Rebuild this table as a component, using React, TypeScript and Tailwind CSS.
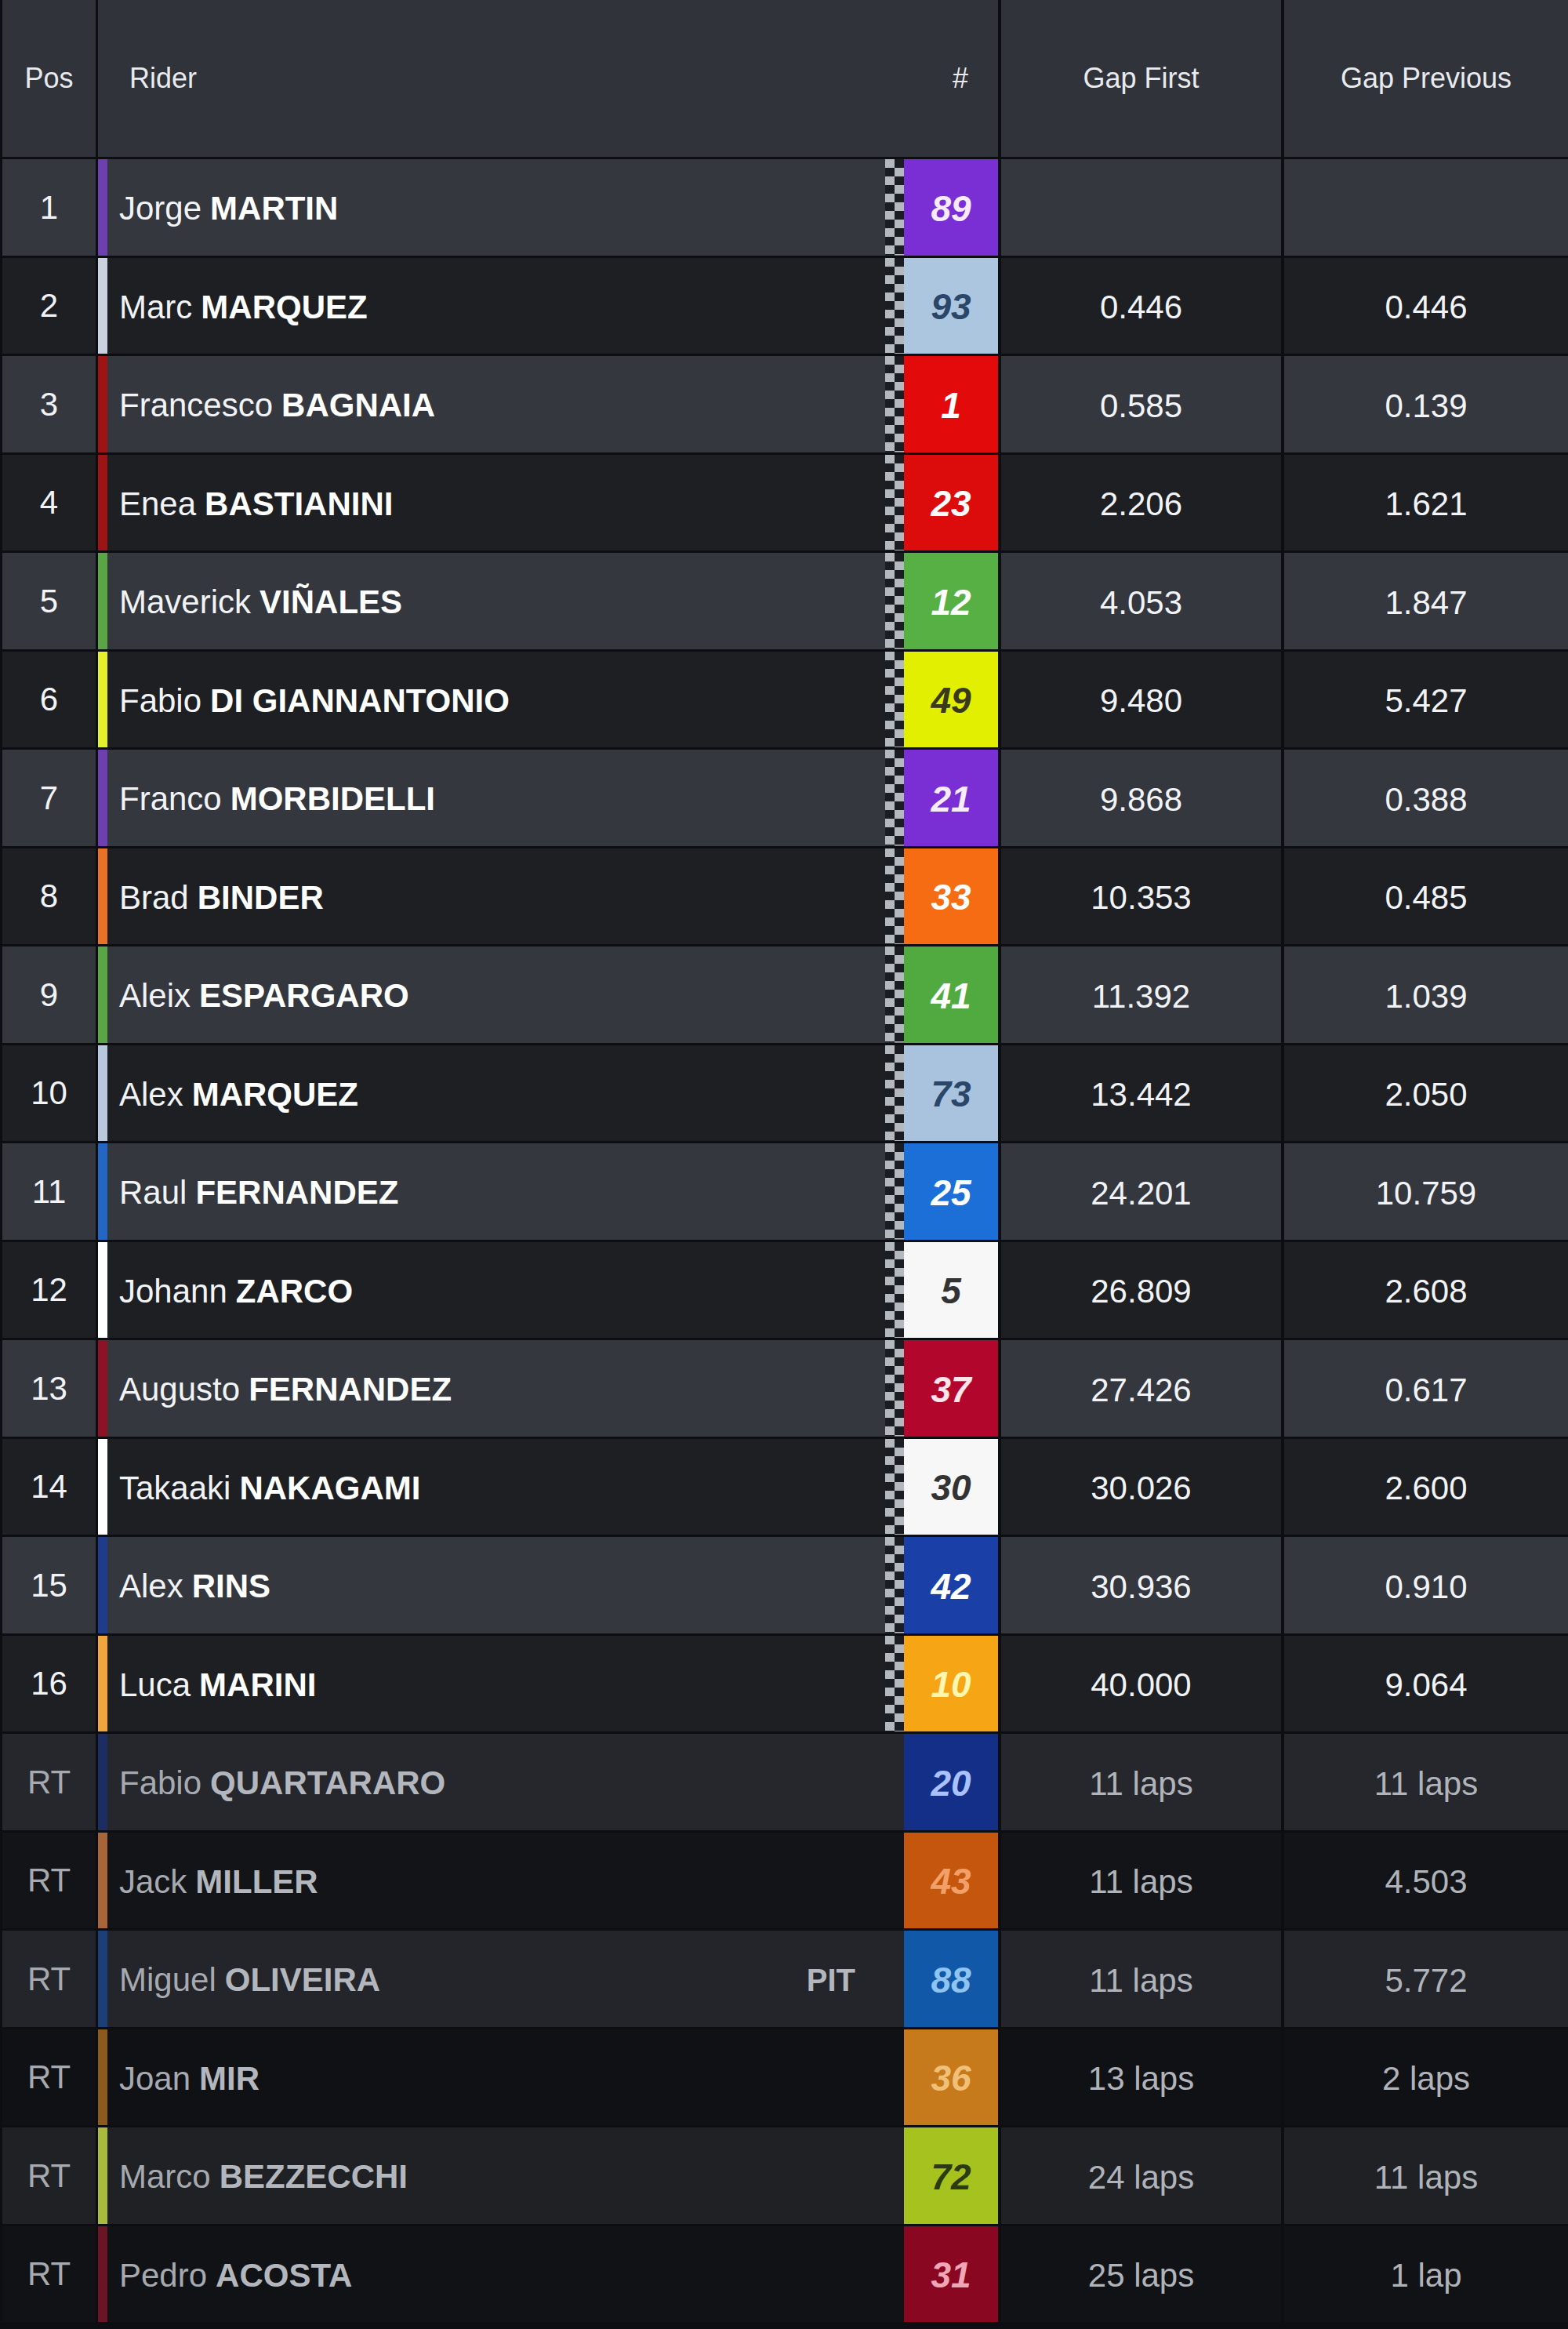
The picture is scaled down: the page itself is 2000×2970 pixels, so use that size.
import React from "react";

type Rider = {
  pos: string;
  first: string;
  last: string;
  num: string;
  bar: string;
  box: string;
  numColor: string;
  gf: string;
  gp: string;
  rt?: boolean;
  pit?: boolean;
};

const riders: Rider[] = [
  { pos: "1", first: "Jorge", last: "MARTIN", num: "89", bar: "#6d3fb0", box: "#7a2fd4", numColor: "#f7ecff", gf: "", gp: "" },
  { pos: "2", first: "Marc", last: "MARQUEZ", num: "93", bar: "#c9d2de", box: "#adc6e0", numColor: "#2a4668", gf: "0.446", gp: "0.446" },
  { pos: "3", first: "Francesco", last: "BAGNAIA", num: "1", bar: "#9e1414", box: "#e20a0a", numColor: "#ffffff", gf: "0.585", gp: "0.139" },
  { pos: "4", first: "Enea", last: "BASTIANINI", num: "23", bar: "#9e1414", box: "#dd0c0c", numColor: "#ffffff", gf: "2.206", gp: "1.621" },
  { pos: "5", first: "Maverick", last: "VIÑALES", num: "12", bar: "#5aa544", box: "#56b044", numColor: "#ffffff", gf: "4.053", gp: "1.847" },
  { pos: "6", first: "Fabio", last: "DI GIANNANTONIO", num: "49", bar: "#e4f02a", box: "#e2f000", numColor: "#3a3a1a", gf: "9.480", gp: "5.427" },
  { pos: "7", first: "Franco", last: "MORBIDELLI", num: "21", bar: "#6d3fb0", box: "#7a2fd4", numColor: "#f7ecff", gf: "9.868", gp: "0.388" },
  { pos: "8", first: "Brad", last: "BINDER", num: "33", bar: "#ea7224", box: "#f56c12", numColor: "#ffffff", gf: "10.353", gp: "0.485" },
  { pos: "9", first: "Aleix", last: "ESPARGARO", num: "41", bar: "#5aa544", box: "#50aa40", numColor: "#ffffff", gf: "11.392", gp: "1.039" },
  { pos: "10", first: "Alex", last: "MARQUEZ", num: "73", bar: "#b9c9dd", box: "#a9c3df", numColor: "#2a4668", gf: "13.442", gp: "2.050" },
  { pos: "11", first: "Raul", last: "FERNANDEZ", num: "25", bar: "#2466c4", box: "#1b6fd6", numColor: "#ffffff", gf: "24.201", gp: "10.759" },
  { pos: "12", first: "Johann", last: "ZARCO", num: "5", bar: "#ffffff", box: "#f7f7f7", numColor: "#333333", gf: "26.809", gp: "2.608" },
  { pos: "13", first: "Augusto", last: "FERNANDEZ", num: "37", bar: "#8e1226", box: "#b3062c", numColor: "#ffe4ea", gf: "27.426", gp: "0.617" },
  { pos: "14", first: "Takaaki", last: "NAKAGAMI", num: "30", bar: "#ffffff", box: "#f7f7f7", numColor: "#333333", gf: "30.026", gp: "2.600" },
  { pos: "15", first: "Alex", last: "RINS", num: "42", bar: "#1f3c8c", box: "#1a40a8", numColor: "#ffffff", gf: "30.936", gp: "0.910" },
  { pos: "16", first: "Luca", last: "MARINI", num: "10", bar: "#f0a63a", box: "#f6a514", numColor: "#fff6b0", gf: "40.000", gp: "9.064" },
  { pos: "RT", first: "Fabio", last: "QUARTARARO", num: "20", bar: "#1c2d64", box: "#132f88", numColor: "#a9c2ff", gf: "11 laps", gp: "11 laps", rt: true },
  { pos: "RT", first: "Jack", last: "MILLER", num: "43", bar: "#a8653a", box: "#c4560e", numColor: "#f2a068", gf: "11 laps", gp: "4.503", rt: true },
  { pos: "RT", first: "Miguel", last: "OLIVEIRA", num: "88", bar: "#1d3f78", box: "#1158a8", numColor: "#90c4f0", gf: "11 laps", gp: "5.772", rt: true, pit: true },
  { pos: "RT", first: "Joan", last: "MIR", num: "36", bar: "#8c5a1c", box: "#c67a1c", numColor: "#f0c078", gf: "13 laps", gp: "2 laps", rt: true },
  { pos: "RT", first: "Marco", last: "BEZZECCHI", num: "72", bar: "#aabb3c", box: "#a6c21e", numColor: "#2c3a10", gf: "24 laps", gp: "11 laps", rt: true },
  { pos: "RT", first: "Pedro", last: "ACOSTA", num: "31", bar: "#6a1426", box: "#8a0722", numColor: "#f0a6b4", gf: "25 laps", gp: "1 lap", rt: true },
];

const rtBgs = ["#25272c", "#131417", "#23252a", "#101114", "#1f2125", "#111215"];

function Checker({ id }: { id: string }) {
  return (
    <svg width="24" height="100%" className="h-full w-[24px] shrink-0" preserveAspectRatio="none">
      <defs>
        <pattern id={id} width="24" height="22" patternUnits="userSpaceOnUse">
          <rect x="0" y="0" width="24" height="22" fill="#1c1d22" />
          <rect x="0" y="0" width="12" height="11" fill="#b4b8bf" />
          <rect x="12" y="11" width="12" height="11" fill="#b4b8bf" />
        </pattern>
      </defs>
      <rect x="0" y="0" width="24" height="100%" fill={`url(#${id})`} />
    </svg>
  );
}

function Row({ r, i }: { r: Rider; i: number }) {
  const bg = r.rt ? rtBgs[i - 16] : i % 2 === 0 ? "#34373e" : "#1d1f23";
  const txt = r.rt ? "text-[#a6aab0]" : "text-[#f1f3f6]";
  const last = r.rt ? "text-[#b3b7bd]" : "text-white";
  return (
    <div className="mt-[3px] flex h-[122.5px]">
      <div
        className={`ml-[3px] flex w-[119px] items-center justify-center text-[42px] ${txt}`}
        style={{ backgroundColor: bg }}
      >
        {r.pos}
      </div>
      <div className="ml-[3px] flex w-[1148px]" style={{ backgroundColor: bg }}>
        <div className="w-[12px] shrink-0" style={{ backgroundColor: r.bar }} />
        <div className="flex flex-1 items-center pl-[15px] pt-[4px] text-[42px] leading-none">
          <span className={txt}>{r.first}</span>
          <span className={`ml-[11px] font-bold ${last}`}>{r.last}</span>
        </div>
        {r.pit && (
          <div className="mr-[62px] flex items-center pt-[4px] text-[40px] font-bold text-[#b3b7bd]">PIT</div>
        )}
        {!r.rt && <Checker id={`chk${i}`} />}
        <div
          className="flex w-[120px] shrink-0 items-center justify-center pt-[4px] text-[46px] font-bold italic"
          style={{ backgroundColor: r.box, color: r.numColor }}
        >
          {r.num}
        </div>
      </div>
      <div
        className={`ml-[4px] flex w-[357px] items-center justify-center pt-[4px] text-[42px] ${r.rt ? "text-[#b0b4ba]" : "text-[#f1f3f6]"}`}
        style={{ backgroundColor: bg }}
      >
        {r.gf}
      </div>
      <div
        className={`ml-[4px] flex flex-1 items-center justify-center pt-[4px] text-[42px] ${r.rt ? "text-[#b0b4ba]" : "text-[#f1f3f6]"}`}
        style={{ backgroundColor: bg }}
      >
        {r.gp}
      </div>
    </div>
  );
}

export default function App() {
  return (
    <div
      className="h-[2970px] w-[2000px] overflow-hidden bg-[#0d0e11]"
      style={{ fontFamily: '"Liberation Sans", Arial, sans-serif' }}
    >
      <div className="flex h-[200px] text-[36px] text-[#e8eaee]">
        <div className="ml-[3px] flex w-[119px] items-center justify-center bg-[#30333a]">Pos</div>
        <div className="ml-[3px] flex w-[1148px] items-center bg-[#30333a]">
          <div className="flex-1 pl-[40px]">Rider</div>
          <div className="w-[120px] pl-[24px] text-center">#</div>
        </div>
        <div className="ml-[4px] flex w-[357px] items-center justify-center bg-[#30333a]">Gap First</div>
        <div className="ml-[4px] flex flex-1 items-center justify-center bg-[#30333a]">Gap Previous</div>
      </div>
      {riders.map((r, i) => (
        <Row key={i} r={r} i={i} />
      ))}
    </div>
  );
}
